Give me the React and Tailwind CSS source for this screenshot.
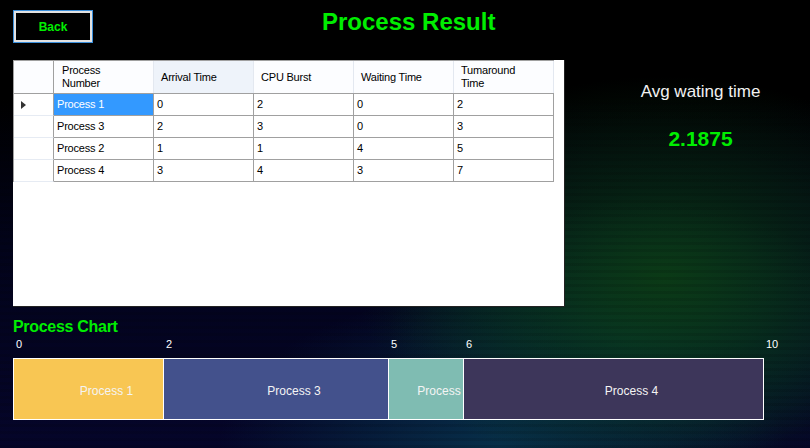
import React from "react";

const rows = [
  ["Process 1", "0", "2", "0", "2"],
  ["Process 3", "2", "3", "0", "3"],
  ["Process 2", "1", "1", "4", "5"],
  ["Process 4", "3", "4", "3", "7"],
];

const segments = [
  { name: "Process 1", w: "w-[150px]", bg: "bg-[#f8c653]" },
  { name: "Process 3", w: "w-[225px]", bg: "bg-[#43518c]" },
  { name: "Process 2", w: "w-[75px]", bg: "bg-[#7fbcb2]" },
  { name: "Process 4", w: "w-[300px]", bg: "bg-[#3d365a]" },
];

const ticks = [
  { t: "0", pos: "left-[3px]" },
  { t: "2", pos: "left-[153px]" },
  { t: "5", pos: "left-[378px]" },
  { t: "6", pos: "left-[453px]" },
  { t: "10", pos: "left-[753px]" },
];

function Grid() {
  return (
    <div className="border-t border-l border-[#a0a0a0] w-[541px] text-[11px] tracking-[-0.2px] text-black">
      <div className="flex h-[33px] border-b border-[#a0a0a0] bg-[#fcfdff]">
        <div className="w-[40px] border-r border-[#a0a0a0]" />
        <div className="w-[100px] border-r border-[#e3e8f0] flex items-center pl-[8px] leading-[13px]">
          Process<br />Number
        </div>
        <div className="w-[100px] border-r border-[#e3e8f0] flex items-center pl-[7px] bg-[#eef3fa]">Arrival Time</div>
        <div className="w-[100px] border-r border-[#e3e8f0] flex items-center pl-[7px]">CPU Burst</div>
        <div className="w-[100px] border-r border-[#e3e8f0] flex items-center pl-[7px]">Waiting Time</div>
        <div className="w-[100px] border-r border-[#e3e8f0] flex items-center pl-[7px] leading-[13px]">
          Tumaround<br />Time
        </div>
      </div>
      {rows.map((r, i) => (
        <div key={i} className="flex h-[22px]">
          <div className="w-[40px] border-r border-[#a0a0a0] border-b border-b-[#e6ebf3] flex items-center pl-[7px]">
            {i === 0 && (
              <svg width="6" height="8" viewBox="0 0 6 8">
                <path d="M0 0 L5 4 L0 8 Z" fill="#333" />
              </svg>
            )}
          </div>
          {r.map((c, j) => (
            <div
              key={j}
              className={
                "w-[100px] border-r border-b border-[#a0a0a0] flex items-center pl-[3px] " +
                (i === 0 && j === 0 ? "bg-[#3399ff] text-white" : "")
              }
            >
              {c}
            </div>
          ))}
        </div>
      ))}
    </div>
  );
}

export default function App() {
  return (
    <div
      className="relative w-[810px] h-[448px] overflow-hidden font-['Liberation_Sans',Arial,sans-serif] bg-[radial-gradient(ellipse_38%_45%_at_82%_62%,#0b3a16_0%,rgba(8,50,20,0.6)_45%,transparent_100%),radial-gradient(ellipse_35%_35%_at_62%_100%,#07304a_0%,transparent_100%),radial-gradient(ellipse_30%_30%_at_78%_75%,#063a3a_0%,transparent_100%),linear-gradient(180deg,#000_0%,#000_22%,#02031a_55%,#05052a_100%)]"
    >
      <div className="absolute inset-0 bg-[repeating-linear-gradient(0deg,rgba(0,0,0,0.1)_0px,rgba(0,0,0,0.1)_3px,transparent_3px,transparent_7px)] pointer-events-none" />
      <div className="relative">
        {/* Header */}
        <div className="flex items-start pt-[10px] pl-[13px]">
          <button className="w-[80px] h-[33px] border border-[#3b8fdb] bg-black flex items-center justify-center p-0">
            <div className="w-full h-full border-2 border-[#e2e2e2] flex items-center justify-center text-[12px] font-bold text-[#00ee00]">
              Back
            </div>
          </button>
          <div className="ml-[229px] mt-[-2px] text-[24px] leading-[28px] font-bold text-[#00ee00]">
            Process Result
          </div>
        </div>

        {/* Main */}
        <div className="flex mt-[17px] pl-[13px]">
          <div className="w-[552px] h-[247px] bg-white border-r border-b border-[#222]">
            <Grid />
          </div>
          <div className="w-[245px] pl-[26px] pt-[22px] flex flex-col items-center">
            <div className="text-[17px] leading-[20px] text-[#f2f2f2]">Avg wating time</div>
            <div className="mt-[25px] text-[21px] leading-[24px] font-bold text-[#00ee00]">2.1875</div>
          </div>
        </div>

        {/* Chart */}
        <div className="pl-[13px] mt-[11px]">
          <div className="text-[16px] leading-[18px] font-bold text-[#00ee00] tracking-[-0.3px]">Process Chart</div>
          <div className="relative h-[13px] mt-[2px] w-[780px] text-[11px] leading-[13px] text-white">
            {ticks.map((k) => (
              <span key={k.t} className={"absolute top-0 " + k.pos}>
                {k.t}
              </span>
            ))}
          </div>
          <div className="mt-[7px] flex h-[62px] border-r border-y border-white w-[751px]">
            {segments.map((s) => (
              <div
                key={s.name}
                className={s.w + " " + s.bg + " h-full border-l border-white overflow-hidden flex items-center justify-center pl-[36px] pt-[4px] shrink-0"}
              >
                <span className="whitespace-nowrap text-[12px] text-[#f4f4f4]">{s.name}</span>
              </div>
            ))}
          </div>
        </div>
      </div>
    </div>
  );
}
